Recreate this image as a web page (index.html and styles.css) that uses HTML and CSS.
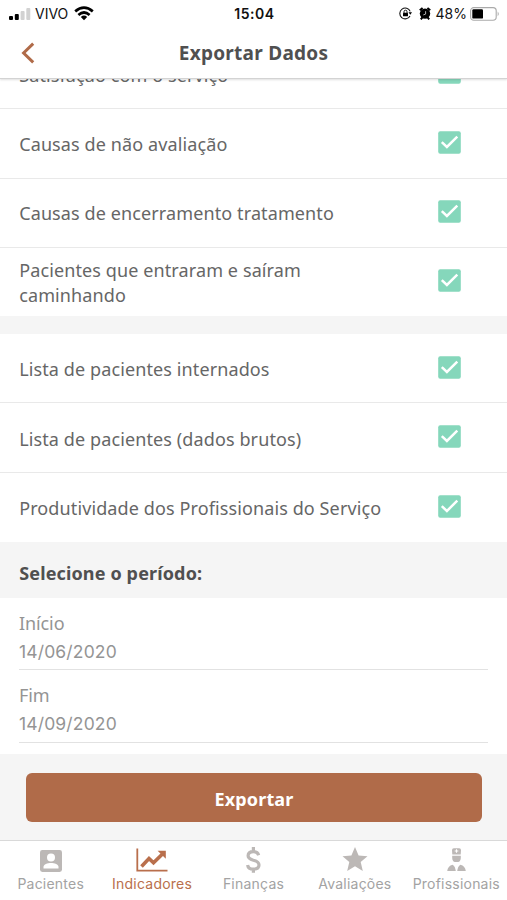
FILE: index.html
```html
<!DOCTYPE html>
<html lang="pt-BR">
<head>
<meta charset="utf-8">
<meta name="viewport" content="width=device-width, initial-scale=1">
<title>Exportar Dados</title>
<link rel="stylesheet" href="styles.css">
</head>
<body>
<svg class="defs" width="0" height="0" aria-hidden="true">
  <symbol id="check" viewBox="0 0 23 23"><rect x=".2" y=".2" width="22.6" height="22.6" rx="2" fill="#85d7bb"/><path d="M3.8 11.2L8.9 16L19.3 5.7" fill="none" stroke="#fff" stroke-width="2.5"/></symbol>
</svg>
<div class="app">
  <header class="top">
    <div class="status">
      <div class="status-left">
        <svg width="22" height="14" viewBox="0 0 22 14"><rect x="0" y="9" width="4" height="4" rx="1"/><rect x="5.8" y="7" width="4" height="6" rx="1"/><g fill="#d2d2d2"><rect x="11.6" y="4" width="4" height="9" rx="1"/><rect x="17.3" y="1" width="4" height="12" rx="1"/></g></svg>
        <span class="carrier">VIVO</span>
        <svg width="20" height="15" viewBox="0 0 20 15"><g fill="none" stroke="#000" stroke-width="2.7"><path d="M1.2 5.4Q10-2 18.8 5.4"/><path d="M4.4 8.9Q10 4.1 15.6 8.9"/></g><path d="M6.8 11Q10 8.2 13.2 11L10 14.2Z"/></svg>
      </div>
      <span class="clock">15:04</span>
      <div class="status-right">
        <svg width="13" height="13" viewBox="0 0 13 13"><path d="M11 9A5.4 5.4 0 1 1 11.2 4.4" fill="none" stroke="#111" stroke-width="1.1"/><path d="M9.5 5.2H13L11.3 7.8Z"/><rect x="4" y="5.7" width="5" height="3.6" rx=".5"/><path d="M5 6V4.7A1.5 1.5 0 0 1 8 4.7V6" fill="none" stroke="#000" stroke-width=".9"/></svg>
        <svg class="alarm" width="12" height="13" viewBox="0 0 12 13"><circle cx="6" cy="6.6" r="5.2"/><path d="M.8 3.3L3.6.9M11.2 3.3L8.4.9M1.8 12.4L3.4 10.4M10.2 12.4L8.6 10.4" stroke="#000" stroke-width="2"/><path d="M6.6 4.2V7.1L4.3 7.9" fill="none" stroke="#ddd" stroke-width=".8"/></svg>
        <span class="percent">48%</span>
        <svg width="30" height="14" viewBox="0 0 30 14"><rect x=".6" y=".6" width="25.6" height="12.6" rx="3.2" fill="#fff" stroke="#aaa" stroke-width="1.1"/><rect x="2.3" y="2.3" width="10.7" height="9.3" rx="1.2"/><path d="M27.7 4.5Q29.8 6.9 27.7 9.3Z" fill="#aaa"/></svg>
      </div>
    </div>
    <div class="title-bar">
      <svg class="back" width="14" height="22" viewBox="0 0 14 22"><path d="M12.2 1.7L2.6 11L12.2 20.3" fill="none" stroke="#b06b49" stroke-width="3"/></svg>
      <h1>Exportar Dados</h1>
    </div>
  </header>
  <main class="content">
    <section class="list first">
      <div class="row"><span>Satisfação com o serviço</span><svg class="box"><use href="#check"/></svg></div>
      <div class="row"><span>Causas de não avaliação</span><svg class="box"><use href="#check"/></svg></div>
      <div class="row"><span>Causas de encerramento tratamento</span><svg class="box"><use href="#check"/></svg></div>
      <div class="row"><span>Pacientes que entraram e saíram<br>caminhando</span><svg class="box"><use href="#check"/></svg></div>
    </section>
    <section class="list second">
      <div class="row"><span>Lista de pacientes internados</span><svg class="box"><use href="#check"/></svg></div>
      <div class="row"><span>Lista de pacientes (dados brutos)</span><svg class="box"><use href="#check"/></svg></div>
      <div class="row"><span>Produtividade dos Profissionais do Serviço</span><svg class="box"><use href="#check"/></svg></div>
    </section>
    <h2>Selecione o período:</h2>
    <section class="dates">
      <div class="field"><label>Início</label><span class="value">14/06/2020</span></div>
      <div class="field"><label>Fim</label><span class="value">14/09/2020</span></div>
    </section>
    <div class="action"><button>Exportar</button></div>
  </main>
  <nav class="tabs">
    <a class="tab"><svg width="32" height="28" viewBox="0 0 32 28"><rect x="5" y="3" width="22" height="22" rx="2.4"/><g fill="#fff"><circle cx="16" cy="10.6" r="4"/><path d="M8.5 21.5V19.8C8.5 17.3 12.5 16 16 16S23.5 17.3 23.5 19.8V21.5Z"/></g></svg><span>Pacientes</span></a>
    <a class="tab active"><svg width="32" height="28" viewBox="0 0 32 28"><path d="M1.3 1.5V23.7H31.5" fill="none" stroke="currentColor" stroke-width="1.8"/><path d="M5.5 19.5L13 11.5L17.5 15.8L26.5 7" fill="none" stroke="currentColor" stroke-width="3.6"/><path d="M21.6 3.7H29.8V11.8Z"/></svg><span>Indicadores</span></a>
    <a class="tab"><svg width="32" height="28" viewBox="0 0 32 28"><path d="M21.7 8.2C20.9 5.7 18.9 4.7 16.4 4.7C13 4.7 11.1 6.4 11.1 8.8C11.1 11.5 13.4 12.4 16.4 13.2C19.7 14 22 15.2 22 18C22 20.6 19.8 22.2 16.4 22.2C13.1 22.2 11 20.7 10.6 17.9M16.4 0V4.5M16.4 22V25.7" fill="none" stroke="currentColor" stroke-width="3.2"/></svg><span>Finanças</span></a>
    <a class="tab"><svg width="32" height="28" viewBox="0 0 32 28"><path d="M16 0L19.6 8.4L28.5 9.2L21.7 15.1L23.8 24L16 19.2L8.2 24L10.3 15.1L3.5 9.2L12.4 8.4Z"/></svg><span>Avaliações</span></a>
    <a class="tab"><svg width="32" height="28" viewBox="0 0 32 28"><path d="M12 3.2Q12 1.2 13.8 1.2H19.2Q21 1.2 21 3.2L20.7 7.5H12.3Z"/><path d="M14.7 4H18.3M16.5 2.3V5.8" stroke="#fff" stroke-width="1.1"/><path d="M12.2 8.8H20.8V10.9Q20.8 15.1 16.5 15.1T12.2 10.9Z"/><path d="M7.2 24Q7.8 18.9 12.6 17.7Q15.2 19.3 15.8 24ZM25.8 24Q25.2 18.9 20.4 17.7Q17.8 19.3 17.2 24Z"/></svg><span>Profissionais</span></a>
  </nav>
</div>
</body>
</html>
```
FILE: styles.css
```css
* { box-sizing: border-box; }
body { margin: 0; background: #fff; font-family: "Noto Sans", sans-serif; color: #666; }
.defs { display: block; }
.app { width: 507px; height: 900px; display: flex; flex-direction: column; overflow: hidden; }
.top { height: 79px; flex: none; background: #fff; z-index: 1; border-bottom: 1px solid #d3d3d3; box-shadow: 0 1px 2px rgba(0,0,0,.13); }
.status { height: 27px; display: grid; grid-template-columns: 1fr auto 1fr; align-items: center; padding: 0 7px 0 9px; color: #111; font-family: Inter, sans-serif; }
.status svg { display: block; }
.status-left, .status-right { display: flex; align-items: center; }
.status-right { justify-content: flex-end; }
.carrier { font-size: 14px; margin: 0 6px 0 4px; }
.clock { font-size: 14px; font-weight: 600; letter-spacing: .55px; }
.alarm { margin: 0 5px 0 7px; }
.percent { font-size: 14px; margin-right: 3px; }
.title-bar { height: 51px; display: grid; grid-template-columns: 80px 1fr 80px; align-items: center; }
.back { margin-left: 21px; }
h1 { margin: 0; text-align: center; font-size: 19px; line-height: 26px; font-weight: 700; letter-spacing: .27px; color: #505050; white-space: nowrap; }
.content { flex: 1; min-height: 0; background: #f5f5f5; overflow: hidden; }
.list { background: #fff; }
.first { margin-top: -39px; }
.second { margin-top: 18px; }
.row { height: 69.25px; display: flex; align-items: center; justify-content: space-between; padding: 2.4px 46px 0 19.2px; border-bottom: 1px solid #e9e9e9; font-size: 18px; line-height: 25px; letter-spacing: .11px; white-space: nowrap; }
.row:last-child { height: 68.25px; border-bottom: 0; padding-top: 2.6px; }
.box { width: 23px; height: 23px; flex: none; margin-top: -5px; }
.second .row { padding-top: 3.4px; }
.second .row:last-child { height: 69px; padding-top: 3px; }
h2 { height: 56px; margin: 0; padding: 6px 19.2px 0; font-size: 18px; line-height: 51px; font-weight: 700; letter-spacing: .14px; color: #505050; }
.dates { height: 156.5px; background: #fff; padding: 0 19px; }
.field { height: 72.5px; padding-top: 12px; border-bottom: 1px solid #e2e2e2; color: #949494; display: flex; flex-direction: column; }
label { font-size: 18px; line-height: 27px; letter-spacing: -.1px; }
.value { font-family: Inter, sans-serif; font-size: 17.5px; line-height: 30.5px; letter-spacing: .15px; }
.action { height: 86px; padding: 18.8px 25px 0 26px; }
button { display: block; width: 100%; height: 49px; border: 0; border-radius: 6px; background: #b06b49; color: #fff; font: 700 18px "Noto Sans", sans-serif; letter-spacing: .15px; padding: 3px 0 0; }
.tabs { height: 60px; flex: none; border-top: 1px solid #d9d9d9; background: #fff; display: grid; grid-template-columns: repeat(5, 1fr); }
.tab { display: flex; flex-direction: column; align-items: center; padding-top: 6px; color: #bcb8b6; }
.tab svg { fill: currentColor; display: block; }
.tab span { font-family: Inter, sans-serif; font-size: 14px; line-height: 17px; letter-spacing: .22px; color: #a3a3a3; white-space: nowrap; }
.tab.active, .tab.active span { color: #b96f4c; }
```
